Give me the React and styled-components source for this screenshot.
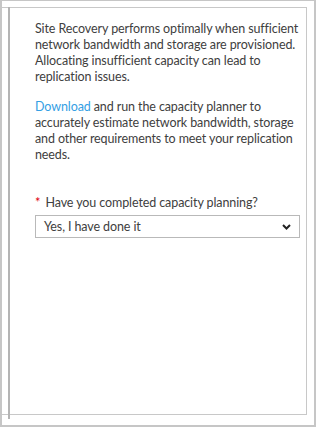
import React from "react";
import styled, { createGlobalStyle } from "styled-components";

const Global = createGlobalStyle`
  html, body { margin: 0; padding: 0; background: #fff; }
  * { box-sizing: border-box; }
`;

const Frame = styled.div`
  position: relative;
  width: 316px;
  height: 427px;
  border: 2px solid #c6c6c6;
  border-top-width: 1px;
  padding: 6px 8px 10px 0;
  display: flex;
  background: #fff;
`;

const Rail = styled.div`
  position: absolute;
  left: 6px;
  top: 6px;
  width: 2px;
  height: 412px;
  background: #b4b4b4;
`;

const Panel = styled.div`
  flex: 1;
  border: 1px solid #c8c8c8;
  border-left: none;
  padding: 13px 6px 0 33px;
  font-family: "Segoe UI", Lato, "Open Sans", sans-serif;
  font-size: 12.5px;
  letter-spacing: -0.1px;
  line-height: 16px;
  color: #404040;
`;

const Para = styled.p`
  margin: 0 0 ${(p) => p.$gap || 0}px 0;
`;

const Link = styled.a`
  color: #35a0e4;
  text-decoration: none;
`;

const Label = styled.div`
  display: flex;
  align-items: baseline;
  gap: 5px;
  margin-bottom: 4px;
`;

const Star = styled.span`
  color: #e0000f;
  font-size: 13px;
`;

const Select = styled.div`
  width: 265px;
  height: 23px;
  border: 1px solid #b9b9b9;
  display: flex;
  align-items: center;
  justify-content: space-between;
  padding: 0 8px 0 8px;
`;

const Chevron = styled.svg`
  width: 9px;
  height: 6px;
  display: block;
`;

export default function App() {
  return (
    <>
      <Global />
      <Frame>
        <Rail />
        <Panel>
          <Para $gap={14}>
            Site Recovery performs optimally when sufficient network bandwidth
            and storage are provisioned. Allocating insufficient capacity can
            lead to replication issues.
          </Para>
          <Para $gap={31}>
            <Link href="#">Download</Link> and run the capacity planner to
            accurately estimate network bandwidth, storage and other
            requirements to meet your replication needs.
          </Para>
          <Label>
            <Star>*</Star>
            <span>Have you completed capacity planning?</span>
          </Label>
          <Select>
            <span>Yes, I have done it</span>
            <Chevron viewBox="0 0 9 6">
              <path d="M1 1 L4.5 4.5 L8 1" fill="none" stroke="#222" strokeWidth="2" />
            </Chevron>
          </Select>
        </Panel>
      </Frame>
    </>
  );
}
